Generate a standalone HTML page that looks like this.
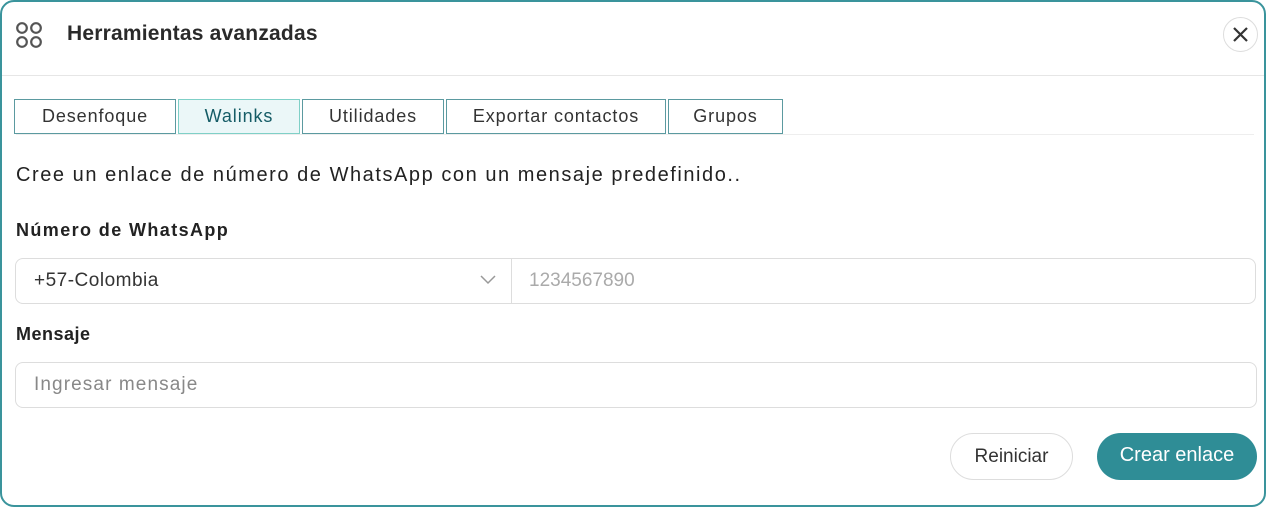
<!DOCTYPE html>
<html><head><style>
*{box-sizing:border-box;margin:0;padding:0}
body{width:1266px;height:507px;background:#fff;font-family:"Liberation Sans",sans-serif;color:#222;overflow:hidden}
.card{position:absolute;left:0;top:0;width:1266px;height:507px;border:2px solid #3a949c;border-radius:14px;background:#fff}
.hdr{position:absolute;left:0;top:0;right:0;height:74px;border-bottom:1px solid #e6e6e6}
.title{position:absolute;left:65px;top:20px;font-size:21px;font-weight:bold;color:#2a2a2a;letter-spacing:0.2px}
.close{position:absolute;left:1221px;top:15px;width:35px;height:35px;border:1px solid #ddd;border-radius:50%}
.tabs{position:absolute;left:14px;top:97px}
.tab{position:absolute;top:0;height:35px;border:1.5px solid #5b9aa0;font-size:18px;text-align:center;line-height:33px;color:#333;background:#fff;letter-spacing:0.9px}
.tabline{position:absolute;left:14px;right:10px;top:132px;border-top:1px solid #eee}
.t{position:absolute;font-size:20px;color:#222;letter-spacing:1.55px}
.b{position:absolute;font-size:18px;font-weight:bold;color:#222;letter-spacing:1.4px}
.inp{position:absolute;border:1px solid #ddd;border-radius:8px;height:46px;font-size:18px;color:#999;line-height:44px;padding-left:18px}
.btn{position:absolute;top:431px;height:47px;border-radius:24px;font-size:19px;line-height:45px;text-align:center}
</style></head><body>
<div class="card">
<div class="hdr">
<svg style="position:absolute;left:13px;top:19px" width="28" height="28" viewBox="0 0 28 28" fill="none" stroke="#555" stroke-width="2.2"><circle cx="7" cy="7" r="4.8"/><circle cx="21" cy="7" r="4.8"/><circle cx="7" cy="21" r="4.8"/><circle cx="21" cy="21" r="4.8"/></svg>
<div class="title">Herramientas avanzadas</div>
<div class="close"><svg width="33" height="33" viewBox="0 0 33 33" stroke="#333" stroke-width="2.2"><path d="M10 10L23 23M23 10L10 23"/></svg></div>
</div>
<div class="tabs">
<div class="tab" style="left:-2px;width:162px">Desenfoque</div>
<div class="tab" style="left:162px;width:122px;background:#ebf7f8;border-color:#7fd0c7;color:#155c66">Walinks</div>
<div class="tab" style="left:286px;width:142px">Utilidades</div>
<div class="tab" style="left:430px;width:220px">Exportar contactos</div>
<div class="tab" style="left:652px;width:115px">Grupos</div>
</div>
<div class="tabline"></div>
<div class="t" style="left:14px;top:162px">Cree un enlace de número de WhatsApp con un mensaje predefinido..</div>
<div class="b" style="left:14px;top:218px">Número de WhatsApp</div>
<div class="inp" style="left:13px;top:256px;width:1241px;padding:0"></div>
<div style="position:absolute;left:32px;top:268px;font-size:19px;color:#333;letter-spacing:0.5px">+57-Colombia</div>
<svg style="position:absolute;left:478px;top:273px" width="16" height="10" viewBox="0 0 16 10" fill="none" stroke="#999" stroke-width="1.5"><path d="M1 1l7 7 7-7"/></svg>
<div style="position:absolute;left:509px;top:257px;height:44px;border-left:1px solid #ddd"></div>
<div style="position:absolute;left:527px;top:268px;font-size:19px;color:#aaa">1234567890</div>
<div class="b" style="left:14px;top:322px;letter-spacing:0.5px">Mensaje</div>
<div class="inp" style="left:13px;top:360px;width:1242px;color:#888;font-size:19px;letter-spacing:1.1px">Ingresar mensaje</div>
<div class="btn" style="left:948px;width:123px;border:1px solid #ddd;color:#333">Reiniciar</div>
<div class="btn" style="left:1095px;width:160px;background:#2f8d96;color:#fff;font-size:20px">Crear enlace</div>
</div>
</body></html>
